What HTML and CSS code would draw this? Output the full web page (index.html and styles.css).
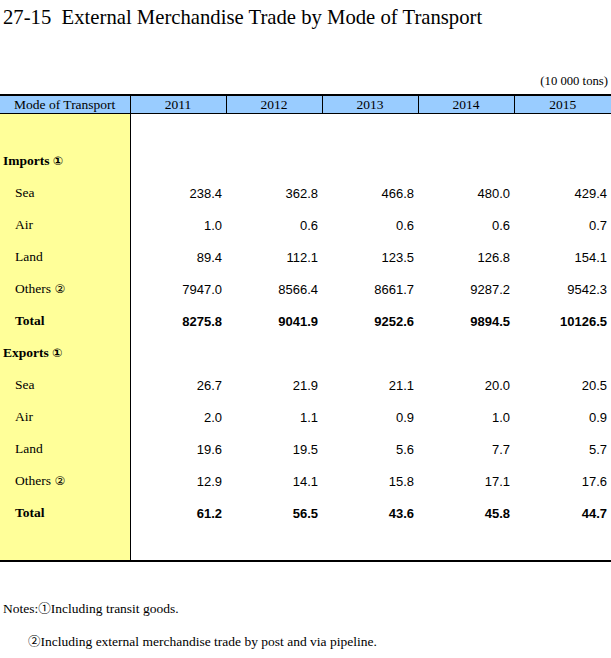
FILE: index.html
```html
<!DOCTYPE html>
<html lang="en">
<head>
<meta charset="utf-8">
<title>27-15 External Merchandise Trade by Mode of Transport</title>
<link rel="stylesheet" href="styles.css">
</head>
<body>
<h1 class="title">27-15&nbsp; External Merchandise Trade by Mode of Transport</h1>
<div class="unit">(10 000 tons)</div>
<table class="data">
  <colgroup>
    <col class="c-label"><col class="c-year"><col class="c-year"><col class="c-year"><col class="c-year"><col class="c-last">
  </colgroup>
  <thead>
    <tr><th>Mode of Transport</th><th>2011</th><th>2012</th><th>2013</th><th>2014</th><th class="last">2015</th></tr>
  </thead>
  <tbody>
    <tr class="spacer"><td class="lbl"></td><td></td><td></td><td></td><td></td><td></td></tr>
    <tr class="group"><td class="lbl">Imports <span class="circ">①</span></td><td></td><td></td><td></td><td></td><td></td></tr>
    <tr><td class="lbl sub">Sea</td><td>238.4</td><td>362.8</td><td>466.8</td><td>480.0</td><td>429.4</td></tr>
    <tr><td class="lbl sub">Air</td><td>1.0</td><td>0.6</td><td>0.6</td><td>0.6</td><td>0.7</td></tr>
    <tr><td class="lbl sub">Land</td><td>89.4</td><td>112.1</td><td>123.5</td><td>126.8</td><td>154.1</td></tr>
    <tr><td class="lbl sub">Others <span class="circ2">②</span></td><td>7947.0</td><td>8566.4</td><td>8661.7</td><td>9287.2</td><td>9542.3</td></tr>
    <tr class="total"><td class="lbl sub">Total</td><td>8275.8</td><td>9041.9</td><td>9252.6</td><td>9894.5</td><td>10126.5</td></tr>
    <tr class="group"><td class="lbl">Exports <span class="circ">①</span></td><td></td><td></td><td></td><td></td><td></td></tr>
    <tr><td class="lbl sub">Sea</td><td>26.7</td><td>21.9</td><td>21.1</td><td>20.0</td><td>20.5</td></tr>
    <tr><td class="lbl sub">Air</td><td>2.0</td><td>1.1</td><td>0.9</td><td>1.0</td><td>0.9</td></tr>
    <tr><td class="lbl sub">Land</td><td>19.6</td><td>19.5</td><td>5.6</td><td>7.7</td><td>5.7</td></tr>
    <tr><td class="lbl sub">Others <span class="circ2">②</span></td><td>12.9</td><td>14.1</td><td>15.8</td><td>17.1</td><td>17.6</td></tr>
    <tr class="total"><td class="lbl sub">Total</td><td>61.2</td><td>56.5</td><td>43.6</td><td>45.8</td><td>44.7</td></tr>
    <tr class="spacer end"><td class="lbl"></td><td></td><td></td><td></td><td></td><td></td></tr>
  </tbody>
</table>
<div class="notes">
  <p class="note">Notes:<span class="circ3">①</span>Including transit goods.</p>
  <p class="note indent"><span class="circ3">②</span>Including external merchandise trade by post and via pipeline.</p>
</div>
</body>
</html>
```
FILE: styles.css
```css
html, body {
  margin: 0;
  padding: 0;
  background: #fff;
  color: #000;
  font-family: "Liberation Serif", "Times New Roman", serif;
}

.title {
  margin: 0;
  padding-left: 3px;
  height: 34px;
  line-height: 34px;
  font-size: 20.7px;
  font-weight: normal;
  white-space: nowrap;
}

.unit {
  margin-top: 39px;
  height: 16px;
  line-height: 16px;
  font-size: 12.7px;
  text-align: right;
  padding-right: 3px;
}

.data {
  margin-top: 5px;
  width: 611px;
  table-layout: fixed;
  border-collapse: collapse;
  border-spacing: 0;
}

.c-label { width: 130px; }
.c-year { width: 96px; }
.c-last { width: 97px; }

.data th {
  background: #99ccff;
  border-top: 2px solid #000;
  border-bottom: 1px solid #000;
  border-right: 1px solid #000;
  height: 17px;
  padding: 0;
  line-height: 17px;
  font-size: 13.5px;
  font-weight: normal;
  text-align: center;
}

.data th.last { border-right: none; }

.data td {
  height: 32px;
  padding: 0 4px 0 0;
  font-family: "Liberation Sans", Arial, sans-serif;
  font-size: 13px;
  text-align: right;
  white-space: nowrap;
}

.data td.lbl {
  background: #ffff99;
  border-right: 1px solid #000;
  font-family: "Liberation Serif", "Times New Roman", serif;
  font-size: 13.5px;
  text-align: left;
  padding-left: 3px;
}

.data td.sub { padding-left: 15px; }

.data tr.spacer td { height: 31px; }
.data tr.end td { border-bottom: 2px solid #000; }

.data tr.group td.lbl { font-weight: bold; }
.data tr.total td { font-weight: bold; }

.circ {
  font-family: "DejaVu Sans", sans-serif;
  font-size: 12px;
  font-weight: bold;
}

.circ2 {
  font-family: "DejaVu Sans", sans-serif;
  font-size: 12px;
}

.circ3 {
  font-family: "Noto Sans CJK JP", "DejaVu Sans", sans-serif;
  font-size: 12.5px;
}

.notes {
  margin-top: 38px;
}

.note {
  margin: 0;
  height: 33px;
  line-height: 16px;
  font-size: 13.5px;
  padding-left: 3px;
  white-space: nowrap;
}

.note.indent { padding-left: 28px; }
```
